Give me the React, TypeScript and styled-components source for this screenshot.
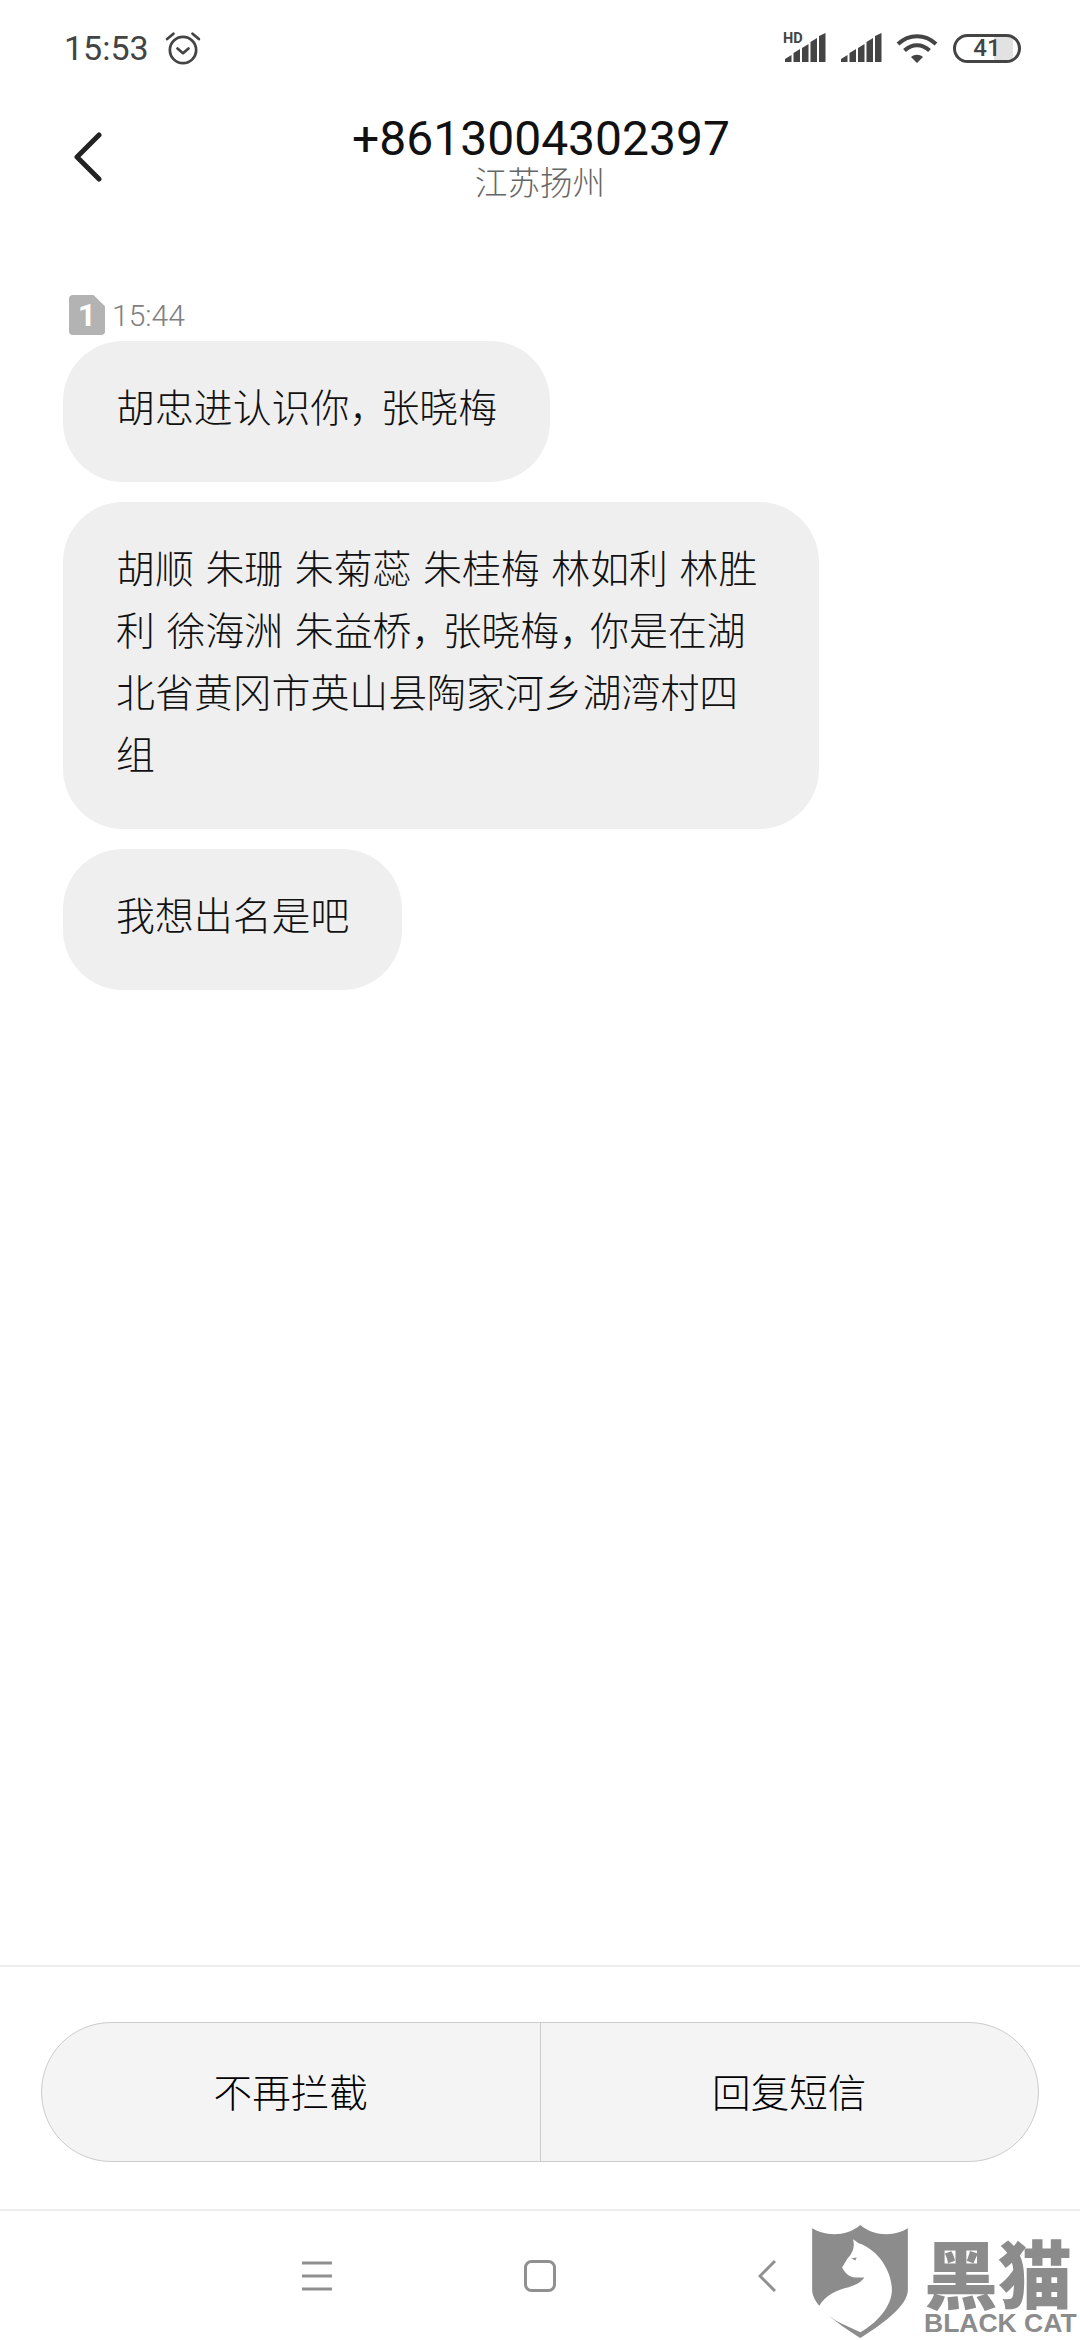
import styled, { createGlobalStyle } from "styled-components";

const GlobalStyle = createGlobalStyle`
  html, body {
    margin: 0;
    padding: 0;
    background: #fff;
  }
  * {
    box-sizing: border-box;
  }
`;

const Page = styled.div`
  position: relative;
  width: 1080px;
  height: 2340px;
  overflow: hidden;
  display: flex;
  flex-direction: column;
  background: #fff;
  font-family: Roboto, "Noto Sans CJK SC", sans-serif;
`;

const StatusBar = styled.div`
  height: 96px;
  padding: 32px 59px 0 64px;
  display: flex;
  justify-content: space-between;
  align-items: flex-start;
`;

const StatusGroup = styled.div`
  display: flex;
  align-items: center;
  gap: ${(p: { $gap: number }) => p.$gap}px;
  height: 32px;
`;

const Clock = styled.span`
  font-size: 34px;
  line-height: 32px;
  color: #444;
`;

const Battery = styled.div`
  width: 68px;
  height: 29px;
  margin-left: 1px;
  border: 3px solid #444;
  border-radius: 15px;
  overflow: hidden;
  display: flex;
  justify-content: center;
  align-items: center;
  font-size: 24px;
  font-weight: 500;
  color: #444;
  background: linear-gradient(to right, #fff 62%, #e2e2e2 62%, #e2e2e2 92%, #fff 92%);
`;

const Header = styled.header`
  position: relative;
  height: 128px;
  padding-top: 16px;
  display: flex;
  flex-direction: column;
  align-items: center;
`;

const BackButton = styled.div`
  position: absolute;
  left: 74px;
  top: 36px;
  display: flex;
`;

const Phone = styled.div`
  font-size: 48px;
  line-height: 54px;
  margin-left: 2px;
  color: #111;
`;

const Region = styled.div`
  font-size: 32.500px;
  line-height: 36px;
  font-weight: 300;
  color: #666;
`;

const Messages = styled.main`
  flex: 1;
  padding: 71px 0 0 63px;
  display: flex;
  flex-direction: column;
  align-items: flex-start;
`;

const TimeRow = styled.div`
  display: flex;
  align-items: center;
  gap: 7px;
  height: 40px;
  margin: 0 0 6px 6px;
`;

const SimBadge = styled.div`
  width: 36px;
  height: 40px;
  display: flex;
  justify-content: center;
  align-items: center;
  background: #b3b3b3;
  border-radius: 4px;
  clip-path: polygon(0 0, 68% 0, 100% 28%, 100% 100%, 0 100%);
  color: #fff;
  font-size: 32px;
  font-weight: 700;
`;

const MessageTime = styled.span`
  font-size: 30px;
  font-weight: 300;
  color: #808080;
`;

const Bubble = styled.div`
  max-width: 756px;
  padding: 33px 53px 46px;
  margin-bottom: 20px;
  background: #efefef;
  border-radius: 60px;
  font-family: "Noto Sans CJK SC", sans-serif;
  font-size: 38.900px;
  line-height: 62px;
  word-spacing: 3px;
  font-weight: 300;
  font-feature-settings: "halt";
  color: #111;
`;

const Actions = styled.section`
  height: 246px;
  padding-top: 55px;
  display: flex;
  justify-content: center;
  border-top: 2px solid #ececec;
  border-bottom: 2px solid #ececec;
`;

const ActionGroup = styled.div`
  width: 998px;
  height: 140px;
  display: flex;
  background: #f4f4f4;
  border: 1px solid #ccc;
  border-radius: 70px;
`;

const ActionButton = styled.div`
  flex: 1;
  display: flex;
  justify-content: center;
  align-items: center;
  padding-bottom: 5px;
  font-family: "Noto Sans CJK SC", sans-serif;
  font-size: 38.600px;
  font-weight: 300;
  color: #000;

  & + & {
    border-left: 1px solid #ccc;
  }
`;

const NavBar = styled.nav`
  height: 129px;
  padding-left: 206px;
  display: grid;
  grid-template-columns: 222px 224px 230px;
  align-items: center;
  justify-items: center;
`;

const Watermark = styled.div`
  position: absolute;
  left: 812px;
  top: 2225px;
  display: flex;
  gap: 16px;
`;

const WatermarkText = styled.div`
  display: flex;
  flex-direction: column;
  width: 150px;
  padding-top: 8px;
  color: #8c8c8c;
`;

const WatermarkName = styled.div`
  font-family: "Noto Sans CJK SC", sans-serif;
  font-size: 74px;
  line-height: 76px;
  font-weight: 900;
`;

const WatermarkLatin = styled.div`
  font-family: "Liberation Sans", Arial, sans-serif;
  font-size: 26.500px;
  line-height: 28px;
  font-weight: 700;
  white-space: nowrap;
`;

const AlarmIcon = () => (
  <svg width="36" height="34" viewBox="0 0 34 32" fill="none" stroke="#444" strokeWidth="2.600" strokeLinecap="round" strokeLinejoin="round">
    <circle cx="17" cy="18" r="12.400" />
    <path d="M11.800 16.500l5.200 4.400 5.200-4.400" />
    <path d="M2 7.500l6-5M32 7.500l-6-5" />
  </svg>
);

const SignalIcon = ({ hd }: { hd?: boolean }) => (
  <svg width="42" height="30" viewBox="0 0 42 30" fill="#444" overflow="visible">
    <path d="M1 29v-3l6.500-4v7zM9.500 29V20l6.500-4v13zM18 29V15l6.500-4v18zM26.500 29V9l6.500-4v24zM35 29V3l6.500-3v29z" />
    {hd && (
      <text x="-1" y="10" fontFamily="Roboto, sans-serif" fontSize="14.500" fontWeight="700">
        HD
      </text>
    )}
  </svg>
);

const WifiIcon = () => (
  <svg width="42" height="30" viewBox="0 0 42 30" fill="none" stroke="#444" strokeWidth="4">
    <path d="M2 11c11-10.500 27-10.500 38 0" />
    <path d="M8.500 17.500c7.500-7 17.500-7 25 0" />
    <path d="M21 30l-6-6c3.500-3 8.500-3 12 0z" fill="#444" stroke="none" />
  </svg>
);

const BackIcon = () => (
  <svg width="28" height="50" viewBox="0 0 28 50" fill="none" stroke="#222" strokeWidth="5" strokeLinecap="round" strokeLinejoin="round">
    <path d="M25 3L3 25l22 22" />
  </svg>
);

const MenuIcon = () => (
  <svg width="30" height="30" viewBox="0 0 30 30" fill="none" stroke="#909090" strokeWidth="3">
    <path d="M0 2h30M0 15h30M0 28h30" />
  </svg>
);

const HomeIcon = () => (
  <svg width="32" height="32" viewBox="0 0 32 32" fill="none" stroke="#909090" strokeWidth="3">
    <rect x="1.500" y="1.500" width="29" height="29" rx="6" />
  </svg>
);

const NavBackIcon = () => (
  <svg width="18" height="32" viewBox="0 0 18 32" fill="none" stroke="#909090" strokeWidth="3">
    <path d="M17 1L2 16l15 15" />
  </svg>
);

const CatLogo = () => (
  <svg width="96" height="113" viewBox="65 45 288 340">
    <path
      fill="#8c8c8c"
      d="M65 55c40 25 105 25 145-10 40 35 105 35 143 10v185c0 50-80 105-143 145C147 345 65 290 65 240z"
    />
    <path
      fill="#fff"
      d="M188 88l17 12c60 20 100 85 100 140 0 50-45 100-95 128l-60-28c-35-20-60-40-65-50 20-35 55-50 90-58 20-6 37-14 47-29h-27c-15 0-30-10-40-30l15-25c15-15 25-35 18-60z"
    />
    <path fill="#8c8c8c" d="M183 146l16-3-4 9z" />
  </svg>
);

const App = () => {
  return (
    <Page>
      <GlobalStyle />
      <StatusBar>
        <StatusGroup $gap={16}>
          <Clock>15:53</Clock>
          <AlarmIcon />
        </StatusGroup>
        <StatusGroup $gap={14}>
          <SignalIcon hd />
          <SignalIcon />
          <WifiIcon />
          <Battery>41</Battery>
        </StatusGroup>
      </StatusBar>
      <Header>
        <BackButton>
          <BackIcon />
        </BackButton>
        <Phone>+8613004302397</Phone>
        <Region>江苏扬州</Region>
      </Header>
      <Messages>
        <TimeRow>
          <SimBadge>1</SimBadge>
          <MessageTime>15:44</MessageTime>
        </TimeRow>
        <Bubble>胡忠进认识你， 张晓梅</Bubble>
        <Bubble>胡顺 朱珊 朱菊蕊 朱桂梅 林如利 林胜利 徐海洲 朱益桥， 张晓梅， 你是在湖北省黄冈市英山县陶家河乡湖湾村四组</Bubble>
        <Bubble>我想出名是吧</Bubble>
      </Messages>
      <Actions>
        <ActionGroup>
          <ActionButton>不再拦截</ActionButton>
          <ActionButton>回复短信</ActionButton>
        </ActionGroup>
      </Actions>
      <NavBar>
        <MenuIcon />
        <HomeIcon />
        <NavBackIcon />
      </NavBar>
      <Watermark>
        <CatLogo />
        <WatermarkText>
          <WatermarkName>黑猫</WatermarkName>
          <WatermarkLatin>BLACK CAT</WatermarkLatin>
        </WatermarkText>
      </Watermark>
    </Page>
  );
};

export default App;
